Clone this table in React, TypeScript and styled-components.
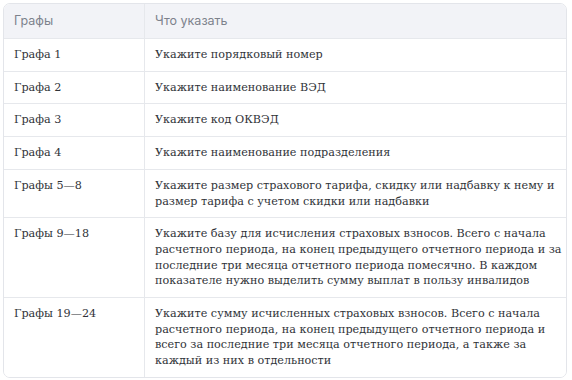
import React from "react";
import styled, { createGlobalStyle } from "styled-components";

const Global = createGlobalStyle`
  html, body { margin: 0; padding: 0; background: #ffffff; }
  body { font-family: "DejaVu Serif", serif; }
`;

const Page = styled.div`
  padding: 3px 5px 0 3px;
`;

const Table = styled.div`
  width: 564px;
  box-sizing: border-box;
  border: 1px solid #e3e5ea;
  border-radius: 7px;
  overflow: hidden;
`;

const Row = styled.div<{ $head?: boolean }>`
  display: grid;
  grid-template-columns: 141px 1fr;
  background: ${(p) => (p.$head ? "#f2f3f7" : "#ffffff")};
  border-top: ${(p) => (p.$head ? "none" : "1px solid #e6e8ec")};
`;

const Cell = styled.div<{ $head?: boolean; $first?: boolean }>`
  padding: ${(p) => (p.$head ? "9px 4px 9px 10px" : "8px 4px 8px 10px")};
  border-right: ${(p) => (p.$first ? "1px solid #e6e8ec" : "none")};
  font-family: ${(p) => (p.$head ? `"Inter", "Open Sans", sans-serif` : `"DejaVu Serif", serif`)};
  font-size: ${(p) => (p.$head ? "12.5px" : "11.2px")};
  line-height: ${(p) => (p.$head ? "16px" : "15.7px")};
  color: ${(p) => (p.$head ? "#7d828c" : "#303338")};
`;

const rows: [string, string][] = [
  ["Графа 1", "Укажите порядковый номер"],
  ["Графа 2", "Укажите наименование ВЭД"],
  ["Графа 3", "Укажите код ОКВЭД"],
  ["Графа 4", "Укажите наименование подразделения"],
  [
    "Графы 5—8",
    "Укажите размер страхового тарифа, скидку или надбавку к нему и размер тарифа с учетом скидки или надбавки",
  ],
  [
    "Графы 9—18",
    "Укажите базу для исчисления страховых взносов. Всего с начала расчетного периода, на конец предыдущего отчетного периода и за последние три месяца отчетного периода помесячно. В каждом показателе нужно выделить сумму выплат в пользу инвалидов",
  ],
  [
    "Графы 19—24",
    "Укажите сумму исчисленных страховых взносов. Всего с начала расчетного периода, на конец предыдущего отчетного периода и всего за последние три месяца отчетного периода, а также за каждый из них в отдельности",
  ],
];

export default function App() {
  return (
    <Page>
      <Global />
      <Table>
        <Row $head>
          <Cell $head $first>Графы</Cell>
          <Cell $head>Что указать</Cell>
        </Row>
        {rows.map(([a, b]) => (
          <Row key={a}>
            <Cell $first>{a}</Cell>
            <Cell>{b}</Cell>
          </Row>
        ))}
      </Table>
    </Page>
  );
}
